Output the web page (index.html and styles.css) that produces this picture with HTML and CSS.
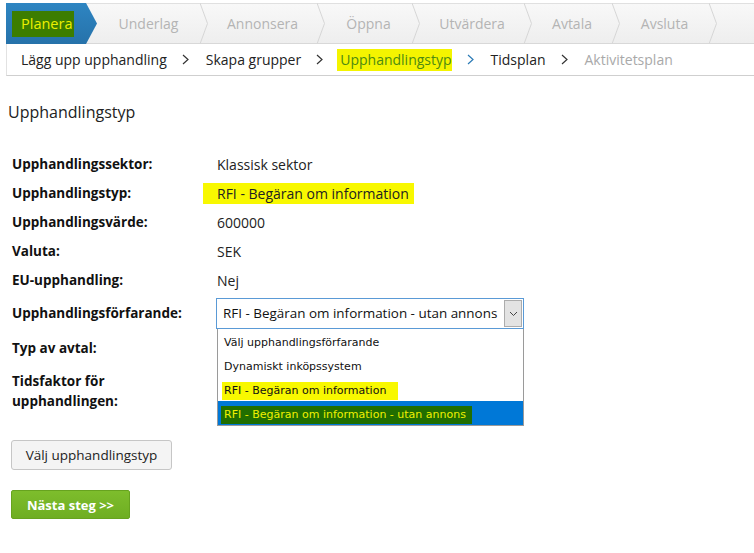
FILE: index.html
```html
<!DOCTYPE html>
<html lang="sv">
<head>
<meta charset="utf-8">
<title>Upphandlingstyp</title>
<link rel="stylesheet" href="styles.css">
</head>
<body>
<div class="steps">
  <div class="step step-active" style="width:91px"><span class="hl-green">Planera</span></div>
  <div class="step" style="width:103px">Underlag</div>
  <svg class="sep" width="8" height="41" viewBox="0 0 8 41"><polyline points="0,0 7.5,20.5 0,41" /></svg>
  <div class="step" style="width:109px">Annonsera</div>
  <svg class="sep" width="8" height="41" viewBox="0 0 8 41"><polyline points="0,0 7.5,20.5 0,41" /></svg>
  <div class="step" style="width:87px">Öppna</div>
  <svg class="sep" width="8" height="41" viewBox="0 0 8 41"><polyline points="0,0 7.5,20.5 0,41" /></svg>
  <div class="step" style="width:104px">Utvärdera</div>
  <svg class="sep" width="8" height="41" viewBox="0 0 8 41"><polyline points="0,0 7.5,20.5 0,41" /></svg>
  <div class="step" style="width:80px">Avtala</div>
  <svg class="sep" width="8" height="41" viewBox="0 0 8 41"><polyline points="0,0 7.5,20.5 0,41" /></svg>
  <div class="step" style="width:89px">Avsluta</div>
  <svg class="sep" width="8" height="41" viewBox="0 0 8 41"><polyline points="0,0 7.5,20.5 0,41" /></svg>
</div>
<div class="crumbs">
  <span class="crumb">Lägg upp upphandling</span>
  <svg class="cr-sep" width="7" height="11" viewBox="0 0 7 11"><polyline points="1,1 6,5.5 1,10" /></svg>
  <span class="crumb">Skapa grupper</span>
  <svg class="cr-sep" width="7" height="11" viewBox="0 0 7 11"><polyline points="1,1 6,5.5 1,10" /></svg>
  <span class="crumb crumb-current"><span class="hl-yellow">Upphandlingstyp</span></span>
  <svg class="cr-sep cr-blue" width="7" height="11" viewBox="0 0 7 11"><polyline points="1,1 6,5.5 1,10" /></svg>
  <span class="crumb">Tidsplan</span>
  <svg class="cr-sep" width="7" height="11" viewBox="0 0 7 11"><polyline points="1,1 6,5.5 1,10" /></svg>
  <span class="crumb crumb-disabled">Aktivitetsplan</span>
</div>
<div class="content">
  <h2 class="title">Upphandlingstyp</h2>
  <div class="form">
    <div class="label">Upphandlingssektor:</div>
    <div class="value">Klassisk sektor</div>
    <div class="label">Upphandlingstyp:</div>
    <div class="value"><span class="hl-value">RFI - Begäran om information</span></div>
    <div class="label">Upphandlingsvärde:</div>
    <div class="value">600000</div>
    <div class="label">Valuta:</div>
    <div class="value">SEK</div>
    <div class="label">EU-upphandling:</div>
    <div class="value">Nej</div>
    <div class="label label-select">Upphandlingsförfarande:</div>
    <div class="value value-select">
      <div class="select">
        <span class="select-text">RFI - Begäran om information - utan annons</span>
        <span class="select-btn"><svg width="9" height="6" viewBox="0 0 9 6"><polyline points="1,1 4.5,4.5 8,1" /></svg></span>
      </div>
      <ul class="options">
        <li>Välj upphandlingsförfarande</li>
        <li>Dynamiskt inköpssystem</li>
        <li><span class="hl-opt">RFI - Begäran om information</span></li>
        <li class="opt-selected"><span class="hl-opt-green">RFI - Begäran om information - utan annons</span></li>
      </ul>
    </div>
    <div class="label label-typ">Typ av avtal:</div>
    <div class="value"></div>
    <div class="label label-tid">Tidsfaktor för upphandlingen:</div>
    <div class="value"></div>
  </div>
  <button class="btn">Välj upphandlingstyp</button>
  <button class="btn-primary">Nästa steg &gt;&gt;</button>
</div>
</body>
</html>
```

FILE: styles.css
```css
* { box-sizing: border-box; }
html, body { margin: 0; padding: 0; background: #fff; }
body {
  font-family: "Open Sans", "Liberation Sans", sans-serif;
  color: #222;
  width: 754px;
  height: 553px;
  overflow: hidden;
}

.steps {
  display: flex;
  margin: 3px 0 0 6px;
  height: 41px;
  background: linear-gradient(#f8f8f8, #eeeeee);
  border-top: 1px solid #e0e0e0;
  border-bottom: 1px solid #d8d8d8;
}
.step {
  flex: none;
  height: 100%;
  display: flex;
  align-items: center;
  justify-content: center;
  font-size: 14px;
  color: #b4b4b4;
}
.step-active {
  background: linear-gradient(#2e85c2, #2672aa);
  clip-path: polygon(0 0, 80px 0, 91px 50%, 80px 100%, 0 100%);
  margin-top: -1px;
  height: 41px;
  justify-content: flex-start;
  padding-left: 6px;
}
.hl-green {
  background: #3c7d00;
  color: #ecf000;
  padding: 3px 2px 4px 9px;
  font-size: 14.5px;
}
.sep { flex: none; margin-top: -1px; }
.sep polyline { fill: none; stroke: #d6d6d6; stroke-width: 1; }

.crumbs {
  display: flex;
  align-items: center;
  margin-left: 6px;
  height: 32px;
  border-left: 1px solid #e2e2e2;
  border-bottom: 1px solid #cfcfcf;
  padding-left: 14px;
  font-size: 14px;
}
.crumb { color: #222; }
.crumb-current { color: #4d8a12; }
.crumb-disabled { color: #a9a9a9; }
.hl-yellow { background: #f4f400; padding: 1px 0 2px 3px; margin-left: -3px; }
.cr-sep { margin: 0 17px 0 15px; }
.cr-sep polyline { fill: none; stroke: #333; stroke-width: 1.2; }
.cr-blue polyline { stroke: #2a7ab5; }

.content { padding-left: 8px; }
.title {
  margin: 25px 0 0;
  font-size: 16px;
  font-weight: normal;
  line-height: 22px;
  color: #222;
}
.form {
  display: grid;
  grid-template-columns: 205px 1fr;
  margin: 27px 0 0 4px;
}
.label {
  font-size: 13.5px;
  font-weight: bold;
  line-height: 21px;
  padding: 4px 14px 4px 0;
  color: #111;
}
.value {
  font-size: 14px;
  line-height: 21px;
  padding: 4px 0;
  color: #222;
}
.hl-value {
  display: inline-block;
  background: #f8f800;
  margin-left: -14px;
  padding: 1px 5px 0 14px;
  line-height: 20px;
}
.label-select { padding-top: 8px; }
.value-select { position: relative; padding: 3px 0 4px; }
.select {
  width: 308px;
  height: 31px;
  display: flex;
  align-items: center;
  border: 1px solid #5a9ad6;
  background: #fff;
  padding: 1px 1px 1px 6px;
  margin-left: -1px;
}
.select-text {
  flex: 1;
  font-size: 13.45px;
  color: #111;
  white-space: nowrap;
}
.select-btn {
  width: 18px;
  height: 27px;
  background: #e3e3e3;
  border: 1px solid #acacac;
  display: flex;
  align-items: center;
  justify-content: center;
}
.select-btn polyline { fill: none; stroke: #444; stroke-width: 1; }
.options {
  position: absolute;
  top: 34px;
  left: 0;
  width: 307px;
  margin: 0;
  padding: 0;
  list-style: none;
  background: #fff;
  border: 1px solid #9a9a9a;
  border-top: none;
  font-family: "DejaVu Sans", "Noto Sans", sans-serif;
  font-size: 11px;
  color: #111;
  z-index: 2;
}
.options li {
  height: 24px;
  line-height: 28px;
  padding-left: 6px;
  white-space: nowrap;
}
.hl-opt { background: #f8f800; padding: 2px 12px 3px 2px; margin-left: -2px; }
.opt-selected { background: #0078d7; }
.hl-opt-green { background: #216e00; color: #f0f000; padding: 2px 6px 3px 3px; margin-left: -3px; }
.label-typ { padding-top: 5px; }
.label-tid { padding-top: 8px; line-height: 20px; }

.btn {
  display: block;
  margin: 25px 0 0 3px;
  width: 161px;
  height: 30px;
  font-family: "Open Sans", sans-serif;
  font-size: 13.5px;
  color: #222;
  background: #f4f4f4;
  border: 1px solid #c6c6c6;
  border-radius: 3px;
  padding: 0;
}
.btn-primary {
  display: block;
  margin: 20px 0 0 3px;
  width: 119px;
  height: 29px;
  font-family: "Open Sans", sans-serif;
  font-size: 13px;
  font-weight: bold;
  color: #fff;
  background: linear-gradient(#7dbd2c, #6fae22);
  border: 1px solid #67a31f;
  border-radius: 2px;
  padding: 0;
}
```
